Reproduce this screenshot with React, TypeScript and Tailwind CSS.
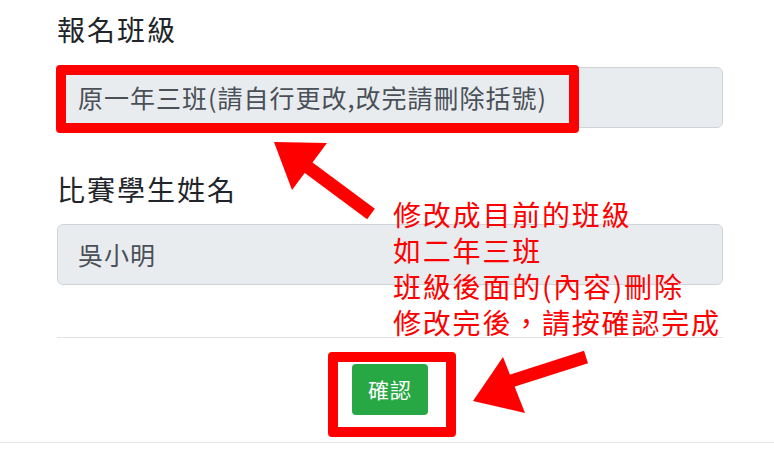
const cjk = "font-['Noto_Sans_CJK_TC','Noto_Sans',sans-serif]";

const notes = [
  "修改成目前的班級",
  "如二年三班",
  "班級後面的(內容)刪除",
  "修改完後，請按確認完成",
];

function Field({ label, value, gap }: { label: string; value: string; gap: string }) {
  return (
    <div>
      <label className={`block text-[28px] leading-[42px] tracking-[2px] text-[#212529] ${gap}`}>{label}</label>
      <div className="h-[61px] flex items-center rounded-md border border-[#ced4da] bg-[#e9ecef] px-[20px] text-[25px] tracking-[1px] text-[#495057]">
        {value}
      </div>
    </div>
  );
}

export default function App() {
  return (
    <div className={`relative w-[774px] h-[455px] overflow-hidden bg-white ${cjk}`}>
      <div className="pl-[57px] pr-[51px] pt-[8px]">
        <Field label="報名班級" value="原一年三班(請自行更改,改完請刪除括號)" gap="mb-[17px]" />
        <div className="mt-[40px]">
          <Field label="比賽學生姓名" value="吳小明" gap="mb-[14px]" />
        </div>
        <div className="mt-[52px] border-t border-[#e3e3e3] flex justify-center pt-[26px] pb-[27px]">
          <button className="h-[51px] w-[76px] rounded-[4px] bg-[#28a745] text-white text-[21px] tracking-[1px]">確認</button>
        </div>
      </div>
      <div className="border-t border-[#e5e5e5]" />

      {/* annotations */}
      <div className="absolute left-[56px] top-[65px] w-[523px] h-[68px] border-[10px] border-[#ff0000] rounded-[4px]" />
      <div className="absolute left-[328px] top-[352px] w-[128px] h-[85px] border-[10px] border-[#ff0000] rounded-[4px]" />
      <svg className="absolute inset-0" width="774" height="455" viewBox="0 0 774 455">
        <line x1="305" y1="165" x2="371" y2="214" stroke="#ff0000" strokeWidth="13" />
        <polygon points="274,142 327,143 292,190" fill="#ff0000" />
        <line x1="505" y1="383" x2="586" y2="357" stroke="#ff0000" strokeWidth="13" />
        <polygon points="473,401 503,357 525,413" fill="#ff0000" />
      </svg>
      <div className="absolute left-[393px] top-[196px] whitespace-nowrap text-[#ff0000] text-[28px] leading-[36px] tracking-[1.8px]">
        {notes.map((n) => (
          <div key={n}>{n}</div>
        ))}
      </div>
    </div>
  );
}
